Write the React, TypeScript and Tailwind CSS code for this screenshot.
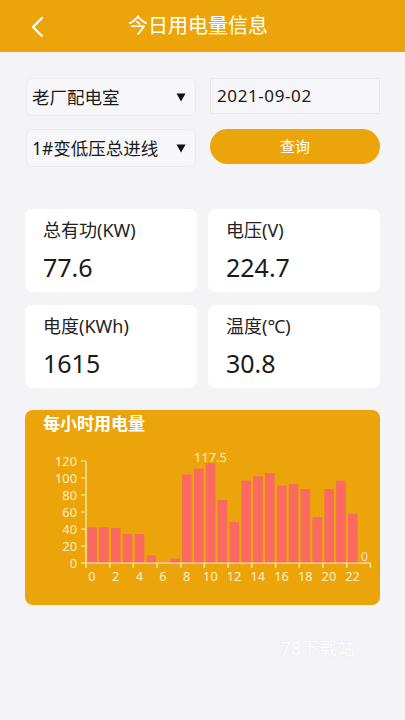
import React from "react";

const font = { fontFamily: '"Noto Sans", "Noto Sans CJK SC", sans-serif' };

// hourly values read off the chart
const hourly = [42, 42, 41, 34, 34, 9, 1, 5, 104, 111, 117.5, 74, 48, 97, 102, 106, 91, 93, 87, 54, 87, 97, 58, 0];

function HourlyChart() {
  const x0 = 61;
  const yTop = 51;
  const yBase = 153;
  const step = 11.85;
  const scale = (yBase - yTop) / 120;
  const cream = "#FCEFC4";
  return (
    <svg width="355" height="167" viewBox="0 28 355 167" className="block">
      {[0, 20, 40, 60, 80, 100, 120].map((v) => {
        const y = yBase - v * scale;
        return (
          <g key={v}>
            <line x1={x0 - 5} x2={x0} y1={y} y2={y} stroke={cream} strokeWidth="1" />
            <text x={x0 - 9} y={y + 4.5} textAnchor="end" fontSize="12.8" fill={cream}>
              {v}
            </text>
          </g>
        );
      })}
      {hourly.map((v, i) => {
        const h = v * scale;
        return (
          <rect key={i} x={x0 + i * step + 1.3} y={yBase - h} width={9.6} height={h} fill="#FA6A61" />
        );
      })}
      <line x1={x0} x2={x0} y1={yTop} y2={yBase} stroke={cream} strokeWidth="1.2" />
      <line x1={x0} x2={x0 + 24 * step} y1={yBase} y2={yBase} stroke={cream} strokeWidth="1.2" />
      {Array.from({ length: 13 }).map((_, k) => (
        <line key={k} x1={x0 + k * 2 * step} x2={x0 + k * 2 * step} y1={yBase} y2={yBase + 5} stroke={cream} strokeWidth="1.2" />
      ))}
      {Array.from({ length: 12 }).map((_, k) => (
        <text key={k} x={x0 + (k * 2 + 0.5) * step} y={171} textAnchor="middle" fontSize="12.8" fill={cream}>
          {k * 2}
        </text>
      ))}
      <text x={x0 + 10.5 * step} y={51.5} textAnchor="middle" fontSize="12.8" fill={cream}>
        117.5
      </text>
      <text x={x0 + 23.5 * step} y={151} textAnchor="middle" fontSize="12.8" fill="#FBD7D0">
        0
      </text>
    </svg>
  );
}

function Arrow() {
  return (
    <svg width="10" height="9" viewBox="0 0 10 9">
      <path d="M0.5 0.5 H9.5 L5 8.5 Z" fill="#111" />
    </svg>
  );
}

function Card({ label, value }: { label: string; value: string }) {
  return (
    <div className="h-[83px] rounded-lg bg-white pl-[18px] pt-[10px]">
      <div className="text-[18px] leading-[22px] text-[#222]">{label}</div>
      <div className="mt-[11px] text-[25px] leading-[30px] text-[#1a1a1a]">{value}</div>
    </div>
  );
}

export default function App() {
  return (
    <div className="relative min-h-[720px] w-full bg-[#F4F3F6]" style={font}>
      <div className="relative flex h-[52px] items-center justify-center bg-[#EBA50A] pr-[9px]">
        <svg className="absolute left-[28px] top-[16px]" width="20" height="22" viewBox="0 0 20 22">
          <path d="M14 2 L5 11 L14 20" fill="none" stroke="white" strokeWidth="2.4" strokeLinecap="round" strokeLinejoin="round" />
        </svg>
        <span className="text-[20px] text-white">今日用电量信息</span>
      </div>

      <div className="grid grid-cols-2 gap-x-[14px] gap-y-[13px] pl-[26px] pr-[25px] pt-[26px]">
        <div className="flex h-[38px] items-center justify-between rounded-md border border-[#ececee] bg-[#F7F7F9] pl-[5px] pr-[9px] text-[17.5px] text-[#1a1a1a]">
          <span>老厂配电室</span>
          <Arrow />
        </div>
        <div className="flex h-[36px] items-center border border-[#e8e8ea] bg-[#F6F6F8] pl-[6px] text-[17px] tracking-[0.6px] text-[#1a1a1a]">
          2021-09-02
        </div>
        <div className="flex h-[38px] items-center justify-between rounded-md border border-[#ececee] bg-[#F7F7F9] pl-[5px] pr-[9px] text-[17.5px] text-[#1a1a1a]">
          <span>1#变低压总进线</span>
          <Arrow />
        </div>
        <div className="flex h-[35px] items-center justify-center rounded-full bg-[#EBA50A] text-[15px] text-white">
          查询
        </div>
      </div>

      <div className="mt-[42px] grid grid-cols-2 gap-x-[11px] gap-y-[13px] px-[25px]">
        <Card label="总有功(KW)" value="77.6" />
        <Card label="电压(V)" value="224.7" />
        <Card label="电度(KWh)" value="1615" />
        <Card label="温度(℃)" value="30.8" />
      </div>

      <div className="mx-[25px] mt-[22px] h-[195px] overflow-hidden rounded-lg bg-[#EBA50A]">
        <div className="h-[28px] pl-[18px] text-[17px] font-bold leading-[28px] text-white">每小时用电量</div>
        <HourlyChart />
      </div>

      <div className="mt-[30px] pr-[50px] text-right text-[18px] text-white [text-shadow:0_0_1px_rgba(0,0,0,0.12)]">
        78下载站
      </div>
    </div>
  );
}
